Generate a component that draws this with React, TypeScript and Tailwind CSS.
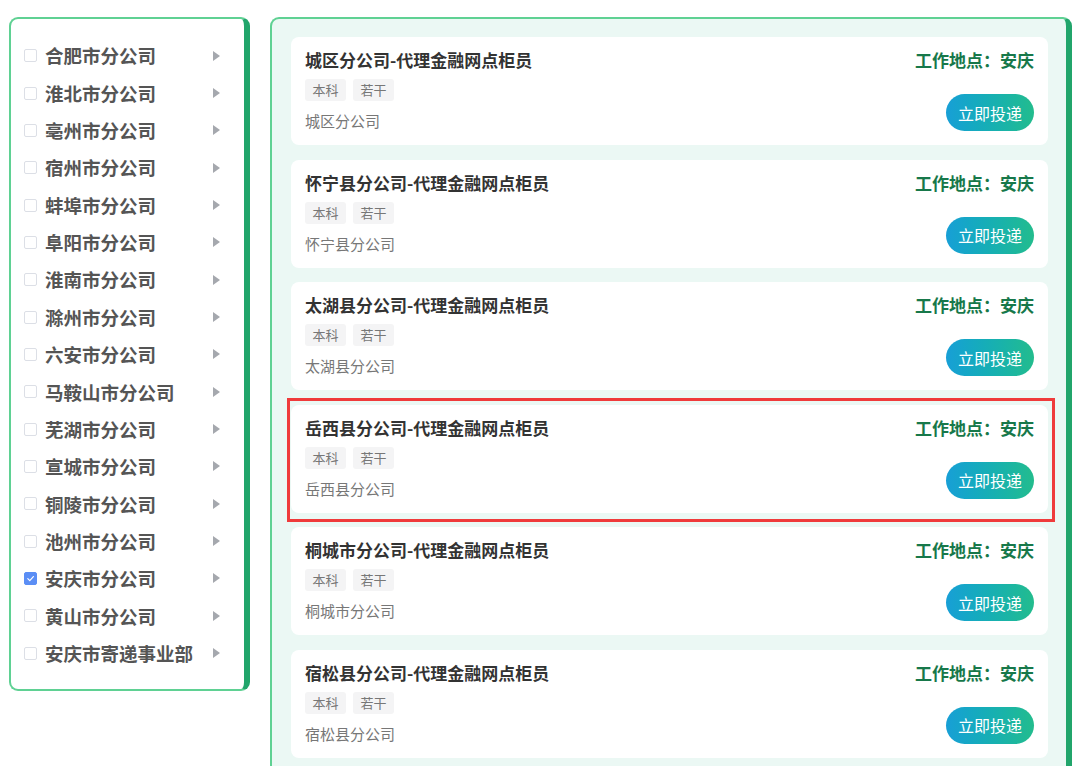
import React from 'react';

const branches = [
  '合肥市分公司',
  '淮北市分公司',
  '亳州市分公司',
  '宿州市分公司',
  '蚌埠市分公司',
  '阜阳市分公司',
  '淮南市分公司',
  '滁州市分公司',
  '六安市分公司',
  '马鞍山市分公司',
  '芜湖市分公司',
  '宣城市分公司',
  '铜陵市分公司',
  '池州市分公司',
  '安庆市分公司',
  '黄山市分公司',
  '安庆市寄递事业部',
];

const jobs = [
  { office: '城区分公司' },
  { office: '怀宁县分公司' },
  { office: '太湖县分公司' },
  { office: '岳西县分公司', marked: true },
  { office: '桐城市分公司' },
  { office: '宿松县分公司' },
];

function Checkbox({ checked }: { checked?: boolean }) {
  if (checked) {
    return (
      <span className="w-[13px] h-[13px] rounded-[2px] bg-[#5b8ef5] border border-[#5b8ef5] flex items-center justify-center shrink-0">
        <svg width="9" height="9" viewBox="0 0 10 10" fill="none">
          <path d="M2 5.2 4.2 7.4 8.2 2.8" stroke="#fff" strokeWidth="1.3" strokeLinecap="round" strokeLinejoin="round" />
        </svg>
      </span>
    );
  }
  return <span className="w-[13px] h-[13px] rounded-[2px] bg-white border border-[#dcdfe6] shrink-0" />;
}

function BranchList() {
  return (
    <div className="w-[241px] h-[674px] shrink-0 bg-white rounded-[9px] border-2 border-[#5fd193] border-r-[6px] border-r-[#21a56b] pt-[18px] pl-[13px] pr-[24px]">
      {branches.map((name, i) => (
        <div key={name} className="h-[37.35px] flex items-center">
          <Checkbox checked={i === 14} />
          <span className="ml-[8px] text-[18.5px] font-bold text-[#555] leading-none flex-1 whitespace-nowrap">{name}</span>
          <span className="w-0 h-0 border-y-[5.5px] border-y-transparent border-l-[7px] border-l-[#a5a8ae]" />
        </div>
      ))}
    </div>
  );
}

function JobCard({ office, marked }: { office: string; marked?: boolean }) {
  return (
    <div className="relative bg-white rounded-[8px] h-[108px] px-[14px] flex justify-between shrink-0">
      {marked && (
        <div className="absolute -top-[7px] -bottom-[9px] -left-[4px] -right-[7px] border-[3px] border-[#ef3b3b] pointer-events-none" />
      )}
      <div className="pt-[12px] flex flex-col">
        <div className="text-[17px] leading-[22px] font-bold text-[#333] whitespace-nowrap">{office}-代理金融网点柜员</div>
        <div className="flex gap-[7px] mt-[8px]">
          <span className="h-[22px] px-[7.5px] rounded-[3px] bg-[#f4f4f5] text-[13px] leading-[21px] text-[#777]">本科</span>
          <span className="h-[22px] px-[7.5px] rounded-[3px] bg-[#f4f4f5] text-[13px] leading-[21px] text-[#777]">若干</span>
        </div>
        <div className="mt-[10px] text-[15px] leading-[20px] text-[#777]">{office}</div>
      </div>
      <div className="pt-[12px] flex flex-col items-end">
        <div className="text-[17px] leading-[22px] font-bold text-[#17784a] whitespace-nowrap">工作地点：安庆</div>
        <button className="mt-[23px] w-[88px] h-[37px] rounded-full bg-gradient-to-r from-[#189fd6] to-[#23bc8d] text-white text-[16px] leading-none">
          立即投递
        </button>
      </div>
    </div>
  );
}

export default function App() {
  return (
    <div
      className="w-[1080px] h-[766px] overflow-hidden bg-white flex items-start pt-[17px] pl-[9px] gap-[20px]"
      style={{ fontFamily: '"Noto Sans CJK SC", "Noto Sans", sans-serif' }}
    >
      <BranchList />
      <div className="w-[802px] h-[900px] shrink-0 bg-[#ebf8f4] rounded-[9px] border-2 border-[#5fd193] border-r-[6px] border-r-[#21a56b] pt-[18px] pl-[19px] pr-[18px] flex flex-col gap-[14.5px]">
        {jobs.map((job) => (
          <JobCard key={job.office} office={job.office} marked={job.marked} />
        ))}
      </div>
    </div>
  );
}
